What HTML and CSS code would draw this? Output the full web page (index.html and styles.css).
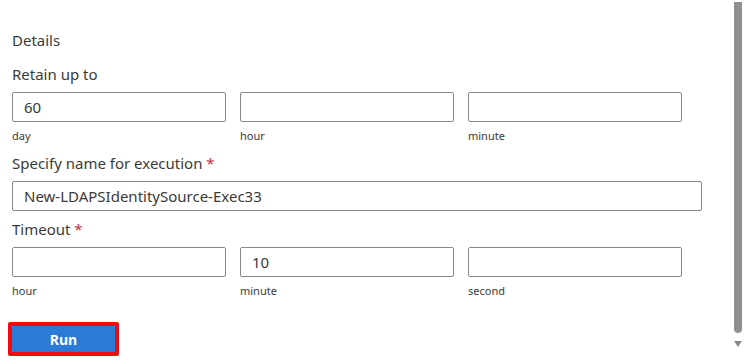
FILE: index.html
```html
<!DOCTYPE html>
<html lang="en">
<head>
  <meta charset="UTF-8">
  <title>Run runbook</title>
  <link rel="stylesheet" href="styles.css">
</head>
<body>
  <div class="page">
    <div class="form">
      <div class="section-title">Details</div>

      <div class="field-label">Retain up to</div>
      <div class="triple">
        <div class="cell">
          <input class="text-input" type="text" value="60">
          <div class="sub-label">day</div>
        </div>
        <div class="cell">
          <input class="text-input" type="text" value="">
          <div class="sub-label">hour</div>
        </div>
        <div class="cell">
          <input class="text-input" type="text" value="">
          <div class="sub-label">minute</div>
        </div>
      </div>

      <div class="field-label">Specify name for execution <span class="req">*</span></div>
      <input class="text-input wide" type="text" value="New-LDAPSIdentitySource-Exec33">

      <div class="field-label timeout">Timeout <span class="req">*</span></div>
      <div class="triple">
        <div class="cell">
          <input class="text-input" type="text" value="">
          <div class="sub-label">hour</div>
        </div>
        <div class="cell">
          <input class="text-input" type="text" value="10">
          <div class="sub-label">minute</div>
        </div>
        <div class="cell">
          <input class="text-input" type="text" value="">
          <div class="sub-label">second</div>
        </div>
      </div>

      <div class="actions">
        <div class="highlight">
          <button class="run-btn">Run</button>
        </div>
      </div>
    </div>

    <div class="scrollbar">
      <div class="scroll-thumb"></div>
      <div class="scroll-arrow"></div>
    </div>
  </div>
</body>
</html>
```

FILE: styles.css
```css
body {
  margin: 0;
  background: #fff;
  font-family: 'Noto Sans', 'Open Sans', sans-serif;
  color: #3b3a39;
}
.page {
  display: flex;
  height: 361px;
  overflow: hidden;
}
.form {
  flex: 1;
  padding: 30px 0 0 12px;
}
.section-title {
  font-size: 15px;
  line-height: 20px;
  margin-bottom: 14px;
}
.field-label {
  font-size: 15px;
  line-height: 20px;
  margin-bottom: 8px;
}
.field-label.timeout {
  margin-top: 8px;
}
.req {
  color: #c4314b;
}
.triple {
  display: flex;
  gap: 14px;
  margin-bottom: 10px;
}
.cell {
  width: 214px;
}
.text-input {
  display: block;
  box-sizing: border-box;
  width: 214px;
  height: 30px;
  margin: 0;
  padding: 0 11px;
  border: 1px solid #8a8886;
  border-radius: 2px;
  font-family: inherit;
  font-size: 15px;
  color: #3b3a39;
  background: #fff;
  outline: none;
}
.text-input.wide {
  width: 690px;
}
.sub-label {
  margin-top: 7px;
  font-size: 11px;
  line-height: 14px;
  color: #3b3a39;
}
.actions {
  margin-top: 24px;
  margin-left: -4px;
}
.highlight {
  display: inline-block;
  border: 4px solid #f00c0c;
  border-radius: 2px;
}
.run-btn {
  display: block;
  width: 103px;
  height: 26px;
  border: none;
  border-radius: 1px;
  background: #2b7ad6;
  color: #fff;
  font-family: inherit;
  font-size: 14px;
  font-weight: bold;
  cursor: pointer;
}
.scrollbar {
  width: 8px;
  margin-right: 8px;
  padding-top: 2px;
  display: flex;
  flex-direction: column;
  align-items: center;
}
.scroll-thumb {
  width: 8px;
  height: 331px;
  background: #8f8f8f;
  border-radius: 0 0 4px 4px;
}
.scroll-arrow {
  margin-top: 8px;
  width: 0;
  height: 0;
  border-left: 4px solid transparent;
  border-right: 4px solid transparent;
  border-top: 6px solid #8a8a8a;
}
```
